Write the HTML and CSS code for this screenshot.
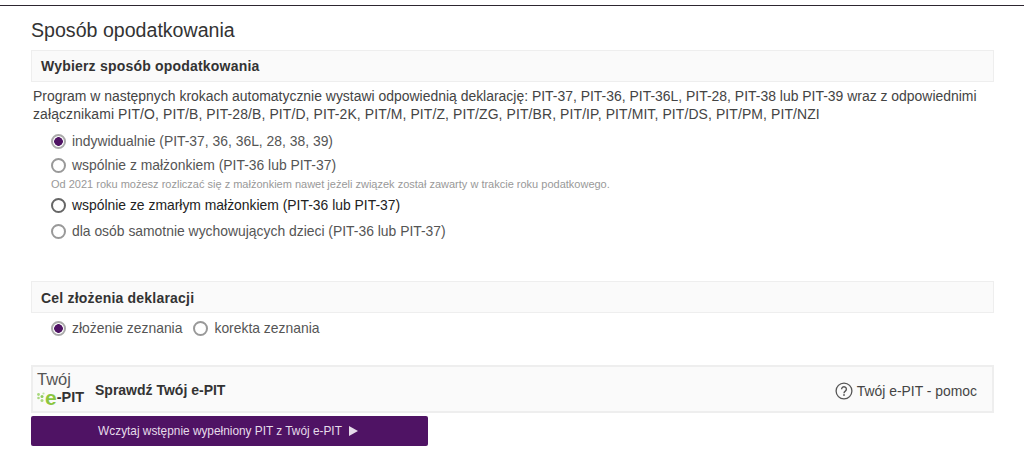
FILE: index.html
```html
<!DOCTYPE html>
<html lang="pl">
<head>
    <meta charset="UTF-8">
    <meta name="viewport" content="width=device-width, initial-scale=1.0">
    <title>Sposób opodatkowania</title>
    <link rel="stylesheet" href="styles.css">
</head>
<body>
    <div class="content">
        <h1>Sposób opodatkowania</h1>

        <h2 class="section-bar">Wybierz sposób opodatkowania</h2>
        <p class="intro">Program w następnych krokach automatycznie wystawi odpowiednią deklarację: PIT-37, PIT-36, PIT-36L, PIT-28, PIT-38 lub PIT-39 wraz z odpowiednimi <span class="intro-end">załącznikami PIT/O, PIT/B, PIT-28/B, PIT/D, PIT-2K, PIT/M, PIT/Z, PIT/ZG, PIT/BR, PIT/IP, PIT/MIT, PIT/DS, PIT/PM, PIT/NZI</span></p>

        <div class="options">
            <div class="option"><span class="radio checked"></span>indywidualnie (PIT-37, 36, 36L, 28, 38, 39)</div>
            <div class="option"><span class="radio"></span>wspólnie z małżonkiem (PIT-36 lub PIT-37)</div>
            <div class="hint">Od 2021 roku możesz rozliczać się z małżonkiem nawet jeżeli związek został zawarty w trakcie roku podatkowego.</div>
            <div class="option dark"><span class="radio strong"></span>wspólnie ze zmarłym małżonkiem (PIT-36 lub PIT-37)</div>
            <div class="option last"><span class="radio"></span>dla osób samotnie wychowujących dzieci (PIT-36 lub PIT-37)</div>
        </div>

        <h2 class="section-bar goal">Cel złożenia deklaracji</h2>
        <div class="options-inline">
            <div class="option"><span class="radio checked"></span>złożenie zeznania</div>
            <div class="option"><span class="radio"></span>korekta zeznania</div>
        </div>

        <div class="epit-bar">
            <div class="epit-logo">
                <span class="logo-top">Twój</span>
                <span class="logo-bottom">
                    <svg class="logo-dots" width="8" height="11" viewBox="0 0 8 11"><circle cx="1.5" cy="2.5" r="1.4" fill="#a9d87e"/><circle cx="1.5" cy="6" r="1.3" fill="#a9d87e"/><circle cx="5" cy="4.5" r="1.5" fill="#8fcb5c"/><circle cx="5" cy="8.5" r="1.5" fill="#a9d87e"/><circle cx="6.5" cy="1.5" r="1.1" fill="#bfe3a0"/></svg><span class="logo-e">e</span>-PIT
                </span>
            </div>
            <strong class="epit-title">Sprawdź Twój e-PIT</strong>
            <a class="epit-help" href="#">
                <svg width="18" height="18" viewBox="0 0 18 18"><circle cx="9" cy="9" r="7.9" fill="none" stroke="#555" stroke-width="1.3"/><path d="M6.6 7.2a2.4 2.4 0 1 1 3.7 2c-.9.6-1.3 1-1.3 2" fill="none" stroke="#555" stroke-width="1.4"/><rect x="8.2" y="12.2" width="1.6" height="1.6" fill="#555"/></svg>
                Twój e-PIT - pomoc
            </a>
        </div>
        <button class="load-btn">Wczytaj wstępnie wypełniony PIT z Twój e-PIT<span class="arrow"></span></button>
    </div>
</body>
</html>
```

FILE: styles.css
```css
* {
    box-sizing: border-box;
}

body {
    margin: 0;
    padding: 0;
    font-family: "Liberation Sans", Arial, sans-serif;
    font-size: 13.9px;
    color: #444;
    background-color: #fff;
}

.content {
    margin-top: 5px;
    border-top: 1px solid #2d2630;
    padding: 0 30px 0 31px;
}

h1 {
    margin: 14px 0 0;
    height: 30px;
    font-size: 19.6px;
    line-height: 20px;
    font-weight: normal;
    color: #333;
}

.section-bar {
    margin: 0;
    height: 32px;
    padding-left: 9px;
    border: 1px solid #eee;
    background-color: #fafafa;
    font-size: 14px;
    letter-spacing: 0.2px;
    line-height: 31px;
    font-weight: bold;
    color: #333;
}

.section-bar.goal {
    margin-top: 38px;
    line-height: 32px;
}

.intro {
    margin: 5px 0 0 2px;
    font-size: 13.95px;
    line-height: 18px;
    color: #444;
}

.intro-end {
    letter-spacing: 0.11px;
}

.options {
    margin: 6px 0 0 20px;
}

.option {
    display: flex;
    align-items: center;
    height: 24px;
    color: #555;
}

.option.dark {
    color: #222;
}

.option.last {
    margin-top: 2px;
}

.radio {
    width: 15px;
    height: 15px;
    margin-right: 6px;
    border: 2px solid #999;
    border-radius: 50%;
    background-color: #fff;
    flex-shrink: 0;
}

.radio.strong {
    border-color: #666;
}

.radio.checked {
    border-color: #aaa;
    background: radial-gradient(circle, #4f1364 0, #4f1364 4px, #fff 4.6px);
}

.hint {
    margin-top: 1px;
    height: 15px;
    font-size: 11px;
    line-height: 13px;
    color: #999;
}

.options-inline {
    display: flex;
    gap: 11px;
    margin: 2px 0 0 20px;
}

.options-inline .option {
    height: 26px;
}

.epit-bar {
    display: flex;
    align-items: center;
    height: 48px;
    margin-top: 24px;
    padding: 0 15px 0 4px;
    border: 2px solid #eee;
    background-color: #fafafa;
}

.epit-logo {
    display: flex;
    flex-direction: column;
    width: 58px;
    margin-bottom: 2px;
    color: #444;
}

.logo-top {
    margin-bottom: 2px;
    font-size: 16.5px;
    line-height: 17px;
    color: #555;
}

.logo-bottom {
    display: flex;
    align-items: center;
    height: 15px;
    font-size: 14.5px;
    line-height: 15px;
    font-weight: bold;
    color: #333;
}

.logo-e {
    color: #8cc63f;
    font-size: 21px;
    line-height: 15px;
}

.epit-title {
    margin-top: 2px;
    font-size: 14px;
    color: #333;
}

.epit-help {
    display: flex;
    align-items: center;
    gap: 4px;
    margin-top: 4px;
    margin-left: auto;
    font-size: 13.9px;
    color: #444;
    text-decoration: none;
}

.load-btn {
    display: block;
    width: 397px;
    height: 30px;
    margin-top: 3px;
    padding-right: 9px;
    border: none;
    border-radius: 2px;
    background-color: #4f1364;
    color: #e6dcea;
    font-family: inherit;
    font-size: 11.85px;
}

.arrow {
    display: inline-block;
    margin-left: 7px;
    border-left: 9px solid #e6dcea;
    border-top: 5px solid transparent;
    border-bottom: 5px solid transparent;
    vertical-align: -1px;
}
```
